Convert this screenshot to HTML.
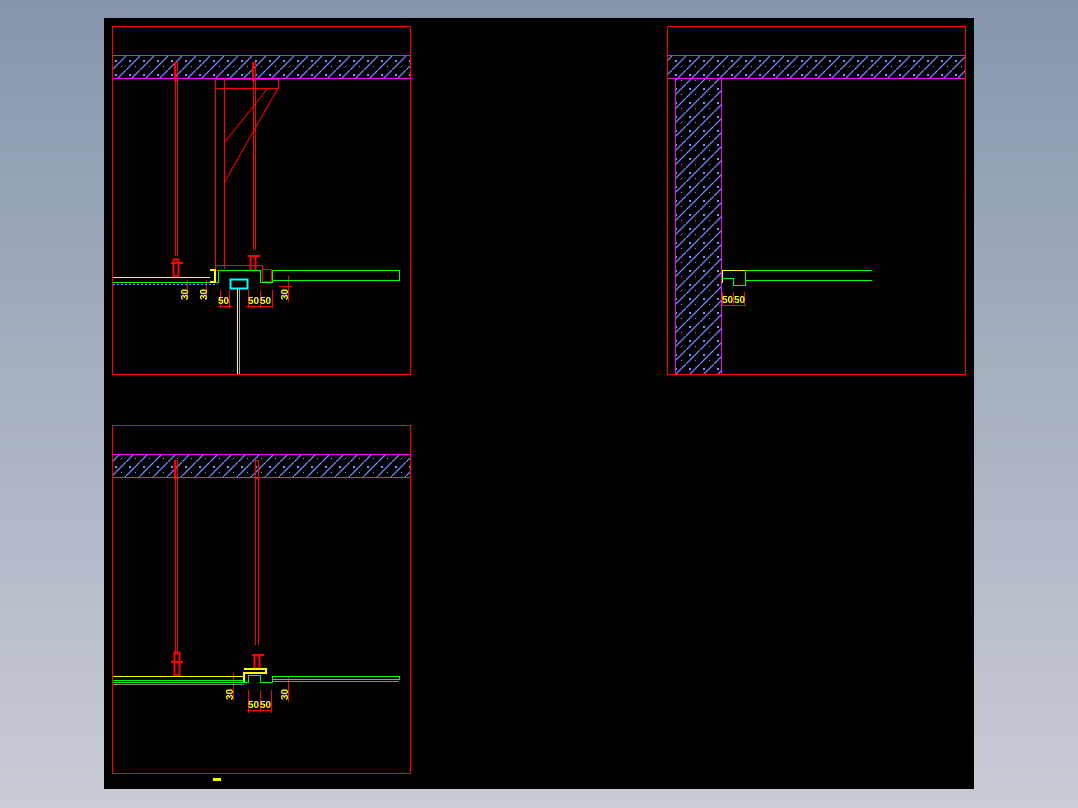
<!DOCTYPE html>
<html><head><meta charset="utf-8"><style>
html,body{margin:0;padding:0;width:1078px;height:808px;overflow:hidden;background:linear-gradient(#8796ad,#c9ccd5);}
svg{display:block}
text{font-family:"Liberation Sans",sans-serif;font-size:10px;fill:#ffff00;font-weight:bold}
</style></head><body>
<svg width="1078" height="808" viewBox="0 0 1078 808" xmlns="http://www.w3.org/2000/svg" shape-rendering="crispEdges">
<defs>
<pattern id="h" width="14" height="14" patternUnits="userSpaceOnUse">
<line x1="0" y1="14" x2="14" y2="0" stroke="#6f86ff" stroke-width="1.3" shape-rendering="auto"/>
<rect x="3" y="4" width="2" height="2" fill="#7f96ff"/><rect x="9" y="10" width="1" height="1" fill="#7f96ff"/>
</pattern>
</defs>
<rect x="104" y="18" width="870" height="771" fill="#000"/>
<!-- view 1 -->
<g fill="none">
<rect x="112.5" y="26.5" width="298" height="348" stroke="#ff0000"/>
<rect x="113" y="56" width="297" height="22" fill="url(#h)"/>
<line x1="113" y1="55.5" x2="410" y2="55.5" stroke="#ff00ff"/>
<line x1="113" y1="78.5" x2="410" y2="78.5" stroke="#ff00ff"/>
<g stroke="#ff0000">
<line x1="175.5" y1="62" x2="175.5" y2="256"/><line x1="177.5" y1="62" x2="177.5" y2="256"/>
<rect x="174.5" y="62.5" width="3" height="18"/>
<line x1="253.5" y1="62" x2="253.5" y2="250"/><line x1="255.5" y1="62" x2="255.5" y2="250"/>
<rect x="252.5" y="62.5" width="3" height="18"/>
<rect x="215.5" y="79.5" width="63" height="9"/>
<line x1="215.5" y1="79" x2="215.5" y2="269"/><line x1="224.5" y1="79" x2="224.5" y2="269"/>
<line x1="224" y1="143" x2="268" y2="88" shape-rendering="auto"/><line x1="224" y1="183" x2="278" y2="88" shape-rendering="auto"/>
<rect x="215.5" y="265.5" width="47" height="5"/>
<rect x="173.5" y="259.5" width="5" height="17" stroke-width="2"/>
<line x1="171" y1="263" x2="183" y2="263" stroke-width="2"/>
<rect x="250.5" y="256.5" width="5" height="14" stroke-width="2"/>
<line x1="248" y1="256" x2="260" y2="256" stroke-width="2"/>
<line x1="187.5" y1="280" x2="187.5" y2="300"/><line x1="206.5" y1="280" x2="206.5" y2="300"/>
<line x1="220.5" y1="290" x2="220.5" y2="308"/><line x1="229.5" y1="290" x2="229.5" y2="308"/><line x1="218" y1="306.5" x2="232" y2="306.5"/>
<line x1="248.5" y1="290" x2="248.5" y2="308"/><line x1="260.5" y1="290" x2="260.5" y2="308"/><line x1="272.5" y1="290" x2="272.5" y2="308"/><line x1="246" y1="306.5" x2="273" y2="306.5"/>
<line x1="288.5" y1="276" x2="288.5" y2="302"/><line x1="279" y1="286.5" x2="292" y2="286.5"/>
<rect x="262.5" y="269.5" width="9" height="12"/>
</g>
<line x1="113" y1="277.5" x2="210" y2="277.5" stroke="#ffff00"/>
<path d="M113 282.5H218.5V270.5H260.5V282.5H272.5V270.5H399.5V280.5H272" stroke="#00ff00"/>
<line x1="113" y1="284.5" x2="218" y2="284.5" stroke="#5a8fff" stroke-dasharray="2,2"/>
<rect x="230.5" y="279.5" width="17" height="9" stroke="#00ffff" stroke-width="2"/>
<line x1="237.5" y1="289" x2="237.5" y2="374" stroke="#ffff00"/><line x1="239.5" y1="289" x2="239.5" y2="374" stroke="#aaa"/>
<path d="M210 270H215V282H210" stroke="#ffff00" stroke-width="2"/>
</g>
<text x="180" y="300" transform="rotate(-90 184 296)">30</text>
<text x="199" y="300" transform="rotate(-90 203 296)">30</text>
<text x="218" y="304">50</text><text x="248" y="304">50</text><text x="260" y="304">50</text>
<text x="280" y="300" transform="rotate(-90 284 296)">30</text>
<!-- view 2 -->
<g fill="none">
<rect x="667.5" y="26.5" width="298" height="348" stroke="#ff0000"/>
<rect x="668" y="56" width="297" height="22" fill="url(#h)"/>
<rect x="676" y="79" width="45" height="295" fill="url(#h)"/>
<line x1="668" y1="55.5" x2="965" y2="55.5" stroke="#ff00ff"/>
<line x1="668" y1="78.5" x2="965" y2="78.5" stroke="#ff00ff"/>
<line x1="675.5" y1="79" x2="675.5" y2="374" stroke="#ff00ff"/>
<line x1="721.5" y1="79" x2="721.5" y2="374" stroke="#ff00ff"/>
<path d="M722 270.5H745.5M722.5 270V283" stroke="#ffff00"/>
<path d="M722 278.5H733.5V285.5H745.5V270.5H872M745 280.5H872" stroke="#00ff00"/>
<g stroke="#ff0000"><line x1="722.5" y1="292" x2="722.5" y2="306"/><line x1="733.5" y1="292" x2="733.5" y2="306"/><line x1="744.5" y1="292" x2="744.5" y2="306"/><line x1="720" y1="305.5" x2="746" y2="305.5"/></g>
</g>
<text x="722" y="303">50</text><text x="734" y="303">50</text>
<!-- view 3 -->
<g fill="none">
<rect x="112.5" y="425.5" width="298" height="348" stroke="#ff0000"/>
<rect x="113" y="455" width="297" height="22" fill="url(#h)"/>
<line x1="113" y1="454.5" x2="410" y2="454.5" stroke="#ff00ff"/>
<line x1="113" y1="477.5" x2="410" y2="477.5" stroke="#ff00ff"/>
<g stroke="#ff0000">
<line x1="175.5" y1="460" x2="175.5" y2="655"/><line x1="177.5" y1="460" x2="177.5" y2="655"/>
<rect x="174.5" y="460.5" width="3" height="18"/>
<line x1="255.5" y1="460" x2="255.5" y2="645"/><line x1="258.5" y1="460" x2="258.5" y2="645"/>
<rect x="255.5" y="460.5" width="3" height="18"/>
<rect x="174.5" y="652.5" width="5" height="23" stroke-width="2"/>
<line x1="171" y1="662" x2="183" y2="662" stroke-width="2"/>
<rect x="254.5" y="655.5" width="5" height="13" stroke-width="2"/>
<line x1="252" y1="655" x2="264" y2="655" stroke-width="2"/>
<line x1="233.5" y1="673" x2="233.5" y2="701"/><line x1="248.5" y1="690" x2="248.5" y2="713"/><line x1="260.5" y1="690" x2="260.5" y2="713"/><line x1="271.5" y1="690" x2="271.5" y2="713"/><line x1="247" y1="710.5" x2="272" y2="710.5"/>
<line x1="288.5" y1="676" x2="288.5" y2="702"/>
</g>
<line x1="113" y1="676.5" x2="244" y2="676.5" stroke="#ffff00"/>
<path d="M244 669H266V673H244V683M254 673H266" stroke="#ffff00" stroke-width="2"/>
<path d="M113 682.5H248.5V675.5H260.5V682.5H272.5V676.5H399.5V679.5H272" stroke="#00ff00"/>
<line x1="113" y1="680.5" x2="244" y2="680.5" stroke="#00ff00"/>
<line x1="113" y1="684.5" x2="244" y2="684.5" stroke="#888"/>
<line x1="272" y1="681.5" x2="399" y2="681.5" stroke="#888"/>
<rect x="213" y="778" width="8" height="3" fill="#ffff00"/>
</g>
<text x="225" y="700" transform="rotate(-90 229 696)">30</text>
<text x="248" y="708">50</text><text x="260" y="708">50</text>
<text x="280" y="700" transform="rotate(-90 284 696)">30</text>
</svg>
</body></html>
